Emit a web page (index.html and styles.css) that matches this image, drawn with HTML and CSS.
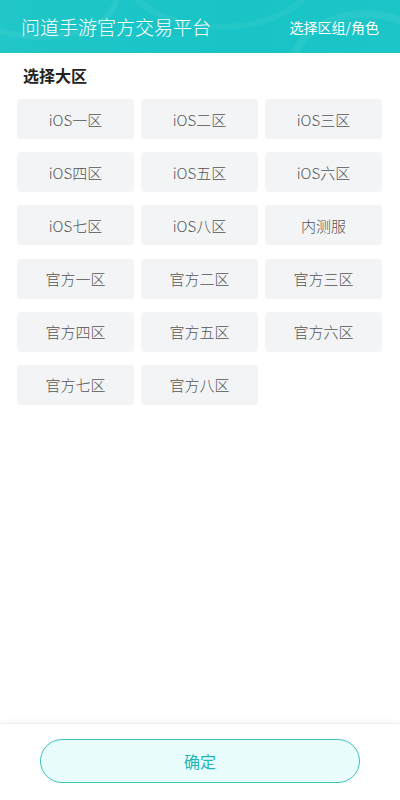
FILE: index.html
```html
<!DOCTYPE html>
<html lang="zh-CN">
<head>
<meta charset="utf-8">
<title>问道手游官方交易平台</title>
<link rel="stylesheet" href="styles.css">
</head>
<body>
<div class="page">
  <header class="header">
    <div class="deco deco-a"></div>
    <div class="deco deco-b"></div>
    <div class="deco deco-c"></div>
    <h1 class="title">问道手游官方交易平台</h1>
    <span class="sub">选择区组/角色</span>
  </header>
  <main class="main">
    <h2 class="section-title">选择大区</h2>
    <div class="grid">
      <div class="zone">iOS一区</div>
      <div class="zone">iOS二区</div>
      <div class="zone">iOS三区</div>
      <div class="zone">iOS四区</div>
      <div class="zone">iOS五区</div>
      <div class="zone">iOS六区</div>
      <div class="zone">iOS七区</div>
      <div class="zone">iOS八区</div>
      <div class="zone">内测服</div>
      <div class="zone">官方一区</div>
      <div class="zone">官方二区</div>
      <div class="zone">官方三区</div>
      <div class="zone">官方四区</div>
      <div class="zone">官方五区</div>
      <div class="zone">官方六区</div>
      <div class="zone">官方七区</div>
      <div class="zone">官方八区</div>
    </div>
  </main>
  <footer class="footer">
    <button class="confirm">确定</button>
  </footer>
</div>
</body>
</html>
```
FILE: styles.css
```css
* { box-sizing: border-box; }
html, body { margin: 0; padding: 0; }
body {
  font-family: "Noto Sans CJK SC", "Noto Sans", sans-serif;
  background: #fff;
  color: #333;
}
.page {
  display: flex;
  flex-direction: column;
  height: 100vh;
}
.header {
  position: relative;
  overflow: hidden;
  height: 53px;
  flex: none;
  display: flex;
  align-items: center;
  justify-content: space-between;
  padding: 0 21px 0 21px;
  background: linear-gradient(90deg, #20c6c8 0%, #18c4c6 60%, #1cc5c8 100%);
  color: #fff;
}
.deco {
  position: absolute;
  border-radius: 50%;
  border: 6px solid rgba(255,255,255,0.06);
  pointer-events: none;
}
.deco-a { width: 160px; height: 90px; left: -40px; top: -50px; }
.deco-b { width: 200px; height: 120px; left: 120px; top: -90px; border-color: rgba(255,255,255,0.05); }
.deco-c { width: 150px; height: 110px; right: -40px; top: 10px; border-width: 8px; }
.title {
  position: relative;
  margin: 0;
  font-size: 19px;
  font-weight: 300;
  letter-spacing: 0;
  line-height: 1;
}
.sub {
  position: relative;
  font-size: 14px;
  font-weight: 400;
  line-height: 1;
  margin-top: 1px;
}
.main {
  flex: 1;
}
.section-title {
  margin: 0;
  padding: 11px 23px 13px;
  font-size: 16px;
  font-weight: 700;
  line-height: 22px;
  color: #222;
}
.grid {
  display: grid;
  grid-template-columns: repeat(3, 117px);
  column-gap: 7px;
  row-gap: 13.2px;
  padding: 0 17px;
}
.zone {
  height: 40px;
  display: flex;
  align-items: center;
  justify-content: center;
  background: #f2f4f5;
  border-radius: 4px;
  font-size: 15px;
  font-weight: 300;
  color: #555;
}
.footer {
  flex: none;
  height: 77px;
  padding: 15px 40px 0;
  border-top: 1px solid #f0f0f0;
  box-shadow: 0 -2px 4px rgba(0,0,0,0.04);
}
.confirm {
  display: block;
  width: 100%;
  height: 44px;
  border: 1px solid #3cc3c3;
  border-radius: 22px;
  background: #e9fdfd;
  color: #21b5b8;
  font-family: inherit;
  font-size: 16px;
  font-weight: 400;
}
```
